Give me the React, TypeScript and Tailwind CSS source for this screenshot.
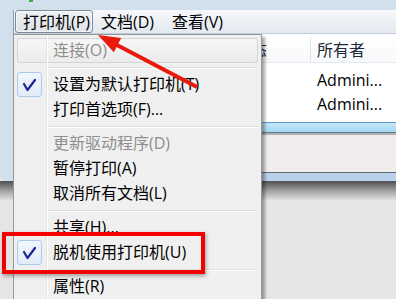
import React from "react";

type MenuEntry =
  | { kind: "item"; label: string; disabled?: boolean; checked?: boolean; hover?: boolean }
  | { kind: "sep" };

const entries: MenuEntry[] = [
  { kind: "item", label: "连接(O)", disabled: true, hover: true },
  { kind: "sep" },
  { kind: "item", label: "设置为默认打印机(T)", checked: true },
  { kind: "item", label: "打印首选项(F)..." },
  { kind: "sep" },
  { kind: "item", label: "更新驱动程序(D)", disabled: true },
  { kind: "item", label: "暂停打印(A)" },
  { kind: "item", label: "取消所有文档(L)" },
  { kind: "sep" },
  { kind: "item", label: "共享(H)..." },
  { kind: "item", label: "脱机使用打印机(U)", checked: true },
  { kind: "sep" },
  { kind: "item", label: "属性(R)" },
];

function CheckBox() {
  return (
    <div className="w-[25px] h-[25px] rounded-[3px] border border-[#aac9ec] bg-linear-to-b from-[#f1f6fc] to-[#e2ebf8]">
      <svg width="23" height="23" viewBox="0 0 23 23">
        <path
          d="M6 11 L9.5 17 L17 7"
          fill="none"
          stroke="#1c2796"
          strokeWidth="2.2"
          strokeLinecap="round"
          strokeLinejoin="round"
        />
      </svg>
    </div>
  );
}

function DropMenu() {
  return (
    <div className="absolute left-[13px] top-[34px] w-[249px] h-[272px] bg-[#f0f0f0] border border-[#979797] pt-[3px] shadow-[3px_3px_3px_rgba(0,0,0,0.35)]">
      {/* icon gutter line */}
      <div className="absolute left-[32px] top-0 bottom-0 w-px bg-[#e2e3e3]" />
      <div className="absolute left-[33px] top-0 bottom-0 w-px bg-white" />
      {entries.map((e, i) =>
        e.kind === "sep" ? (
          <div key={i} className="h-[9px] pt-[4px] pl-[33px] pr-[3px]">
            <div className="h-px bg-[#e0e0e0]" />
            <div className="h-px bg-white" />
          </div>
        ) : (
          <div
            key={i}
            className={
              e.hover
                ? "mx-[3px] h-[25px] flex items-center rounded-[3px] bg-linear-to-b from-[#f7f7f7] to-[#ebebeb] shadow-[inset_0_0_0_1px_#d4d4d4]"
                : "mx-[3px] h-[25px] flex items-center"
            }
          >
            <div className="w-[25px] h-[25px] shrink-0">{e.checked && <CheckBox />}</div>
            <span
              className={
                e.disabled
                  ? "ml-[11px] text-[16px] leading-[25px] whitespace-nowrap text-[#8e8e8e]"
                  : "ml-[11px] text-[16px] leading-[25px] whitespace-nowrap text-black"
              }
            >
              {e.label}
            </span>
          </div>
        )
      )}
    </div>
  );
}

export default function App() {
  return (
    <div className="relative w-[396px] h-[299px] overflow-hidden bg-[#e6e6e6] font-['Open_Sans','Noto_Sans_CJK_SC',sans-serif]">
      {/* window */}
      <div className="h-[181px] bg-[#d2dfed] rounded-bl-[6px] flex flex-col">
        <div className="h-[10px] pl-[29px]">
          <div className="w-[4px] h-[2px] bg-[#3fae3a]" />
        </div>
        <div className="flex-1 ml-[13px] border-l border-[#8d9aab] flex flex-col">
          {/* menu bar */}
          <div className="h-[24px] flex items-start bg-linear-to-b from-[#f6f8fb] to-[#e3e9f0] border-b border-[#c3cbd6] text-[16px] text-black">
            <div className="ml-[1px] h-[23px] w-[78px] pl-[7px] flex items-center rounded-[3px] border border-[#7f8b99] bg-linear-to-b from-[#eef1f5] to-[#dde3ea] shadow-[inset_0_0_0_1px_rgba(255,255,255,0.6)]">
              打印机(P)
            </div>
            <div className="h-[23px] flex items-center pl-[8px] pr-[10px]">文档(D)</div>
            <div className="h-[23px] flex items-center pl-[8px]">查看(V)</div>
          </div>
          {/* list */}
          <div className="h-[88px] bg-white pt-[3px] text-[16px]">
            <div className="h-[26px] flex border-b border-[#e5e8ec] bg-linear-to-b from-white to-[#f7f8fa]">
              <div className="w-[200px]" />
              <div className="w-[97px] pl-[21px] flex items-center border-r border-[#dfe3e8] text-[#1e2a3a]">
                状态
              </div>
              <div className="pl-[6px] flex items-center text-[#1e2a3a]">所有者</div>
            </div>
            <div className="mt-[5px] h-[24px] flex items-center pl-[303px] text-black">Admini...</div>
            <div className="h-[24px] flex items-center pl-[303px] text-black">Admini...</div>
          </div>
          <div className="h-[10px] border-t border-[#5b9bd1] bg-linear-to-b from-[#c4e6f8] to-[#a4d8f3]" />
          <div className="h-[3px] border-t border-[#6f7b85] bg-[#aab1b7]" />
          <div className="h-[38px] bg-[#f0edec] border-b border-[#5f6a73]" />
          <div className="h-[8px] bg-[#b9d1ea]" />
        </div>
      </div>
      {/* shadow under window */}
      <div className="h-[20px] bg-linear-to-b from-[#505050] via-[#a4a4a4] to-[#e6e6e6]" />

      <DropMenu />

      {/* red annotations */}
      <div className="absolute left-[2px] top-[232px] w-[203px] h-[42px] border-[4px] border-[#f50000] shadow-[1px_2px_4px_rgba(0,0,0,0.35)]" />
      <svg className="absolute left-0 top-0 pointer-events-none" width="396" height="299">
        <line x1="197" y1="87" x2="116" y2="44.5" stroke="#e8190f" strokeWidth="4" />
        <polygon points="98,35 121.2,38.1 113.8,52.3" fill="#e8190f" />
      </svg>
    </div>
  );
}
